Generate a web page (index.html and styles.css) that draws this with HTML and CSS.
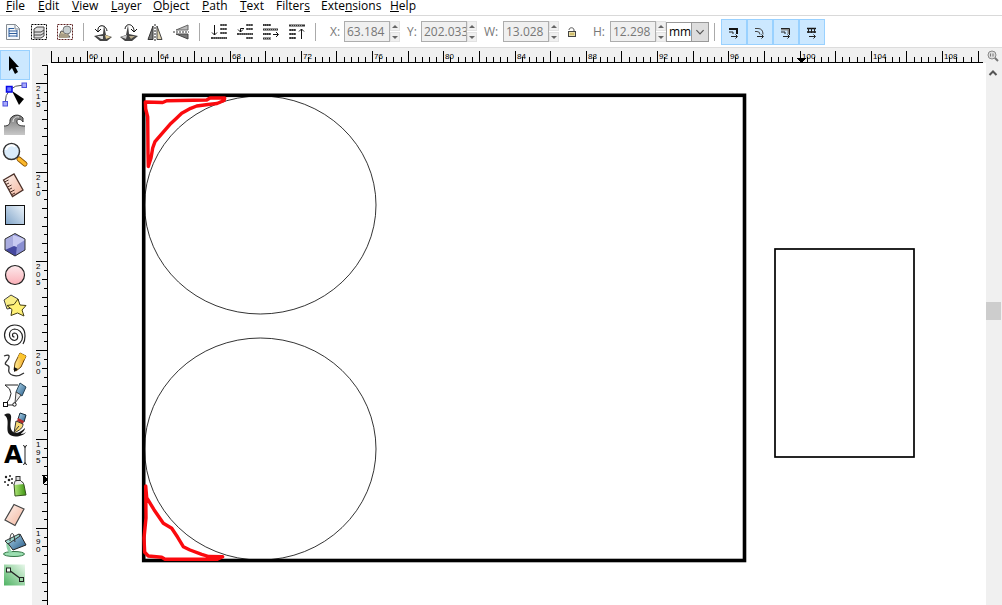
FILE: index.html
```html
<!DOCTYPE html>
<html lang="en">
<head>
<meta charset="utf-8">
<title>Vector editor</title>
<link rel="stylesheet" href="styles.css">
</head>
<body>
<svg class="defs" aria-hidden="true">
  <defs>
    <linearGradient id="blue" x1="0" y1="1" x2="1" y2="0"><stop offset="0" stop-color="#7fa3c8"/><stop offset="1" stop-color="#eef5fb"/></linearGradient>
    <linearGradient id="pink" x1="0" y1="0" x2="0" y2="1"><stop offset="0" stop-color="#fdeaec"/><stop offset="1" stop-color="#fbb0b8"/></linearGradient>
    <linearGradient id="peach" x1="0" y1="0" x2="1" y2="1"><stop offset="0" stop-color="#fdf3ee"/><stop offset="1" stop-color="#f3b49c"/></linearGradient>
    <linearGradient id="gold" x1="0" y1="0" x2="1" y2="0"><stop offset="0" stop-color="#fff0a0"/><stop offset="1" stop-color="#f0a010"/></linearGradient>
    <linearGradient id="green" x1="0" y1="1" x2="1" y2="0"><stop offset="0" stop-color="#4fb363"/><stop offset="1" stop-color="#e9f8eb"/></linearGradient>
    <linearGradient id="steel" x1="0" y1="0" x2="1" y2="1"><stop offset="0" stop-color="#b5dcf0"/><stop offset="1" stop-color="#255a87"/></linearGradient>
    <linearGradient id="wave" x1="0" y1="0" x2="0" y2="1"><stop offset="0" stop-color="#777"/><stop offset="1" stop-color="#c8c8c8"/></linearGradient>
    <linearGradient id="lime" x1="0" y1="0" x2="1" y2="0"><stop offset="0" stop-color="#b4e87c"/><stop offset="1" stop-color="#3c9410"/></linearGradient>
  </defs>
</svg>

<nav class="menubar" aria-label="Main menu">
  <button><u>F</u>ile</button>
  <button><u>E</u>dit</button>
  <button><u>V</u>iew</button>
  <button><u>L</u>ayer</button>
  <button><u>O</u>bject</button>
  <button><u>P</u>ath</button>
  <button><u>T</u>ext</button>
  <button>Filter<u>s</u></button>
  <button>Exte<u>n</u>sions</button>
  <button><u>H</u>elp</button>
</nav>

<div class="toolbar" role="toolbar" aria-label="Tool controls">
  <div class="group">
    <button class="tool" aria-label="Select all"><svg viewBox="0 0 20 20"><path d="M3.500 2.500h9l4 4v11h-13z" fill="#f4f8fc" stroke="#858b91"/><path d="M12 2.500V7h4.500" fill="none" stroke="#858b91"/><path d="M6 6.500h5M6 9h8M6 11.500h8M6 14h8M6 6v9M14 8v7" stroke="#2d5d9c" fill="none"/></svg></button>
    <button class="tool" aria-label="Select all in all layers"><svg viewBox="0 0 20 20"><rect x="2.500" y="2.500" width="15" height="15" fill="none" stroke="#000" stroke-dasharray="2 1"/><g fill="#ddd" stroke="#444"><path d="M5 13l3-2h7v3l-3 2H5z"/><path d="M5 10l3-2h7v3l-3 2H5z"/><path d="M5 7l3-2h7v3l-3 2H5z"/></g></svg></button>
    <button class="tool" aria-label="Deselect"><svg viewBox="0 0 20 20"><rect x="2.500" y="2.500" width="15" height="15" fill="none" stroke="#5d2020" stroke-dasharray="2 1"/><path d="M4 15l2-6 5 1 4 5z" fill="#d6c9a5" stroke="#555"/><circle cx="12" cy="8" r="4" fill="#c9d0d1" stroke="#777"/><path d="M5 11l9 2-2 3H4z" fill="#a89d85"/></svg></button>
  </div>
  <div class="group">
    <button class="tool" aria-label="Rotate counter-clockwise"><svg viewBox="0 0 20 20"><path d="M11 3l2 10 6 2-5 4H7l-6-5 9-2z" fill="#444"/><path d="M12 13l6 2-5 2z" fill="#e5d19a"/><path d="M4 14l6 0v3H8z" fill="#ddd"/><path d="M5 9c-1-7 8-7 9 0M2 7l3 3 3-3" fill="none" stroke="#111"/></svg></button>
    <button class="tool" aria-label="Rotate clockwise"><svg viewBox="0 0 20 20"><path d="M9 3l1 9 9 2-6 5H6l-5-4 6-2z" fill="#444"/><path d="M8 13l-6 2 5 2z" fill="#ccc"/><path d="M10 14l6 0-4 3z" fill="#b9ad8e"/><path d="M6 7c1-7 9-5 9 2M12 7l3 3 3-3" fill="none" stroke="#111"/></svg></button>
    <button class="tool" aria-label="Flip horizontally"><svg viewBox="0 0 20 20"><path d="M8 4v13.500H3z" fill="#777" stroke="#333"/><path d="M12 4v13.500h5z" fill="#ddd1ae" stroke="#444"/><path d="M10 2v17" stroke="#222" stroke-dasharray="2 1"/></svg></button>
    <button class="tool" aria-label="Flip vertically"><svg viewBox="0 0 20 20"><path d="M17 3v5H5z" fill="#bbb" stroke="#666"/><path d="M17 17v-5H5z" fill="#777" stroke="#444"/><path d="M2 10h16" stroke="#333" stroke-dasharray="2 1"/></svg></button>
  </div>
  <div class="group">
    <button class="tool" aria-label="Lower to bottom"><svg viewBox="0 0 20 20"><path d="M5.500 3v10M3 10.500l2.500 2.500L8 10.500" fill="none" stroke="#111"/><path d="M11 3h7M11 7h7M11 11h7M2 16h16" stroke="#444" stroke-width="2"/><path d="M11 3h7M11 7h7M11 11h7M4 16h14" stroke="#999" stroke-dasharray="1 1"/></svg></button>
    <button class="tool" aria-label="Lower"><svg viewBox="0 0 20 20"><path d="M9 6.500H5.500V10M3 7.500l2.500 2.500L8 7.500" fill="none" stroke="#111"/><path d="M11 3h7M11 7h7M2 12h16M11 16h7" stroke="#444" stroke-width="2"/><path d="M11 3h7M11 7h7M4 12h14M11 16h7" stroke="#999" stroke-dasharray="1 1"/></svg></button>
    <button class="tool" aria-label="Raise"><svg viewBox="0 0 20 20"><path d="M12 12.500h5M15 10l2.500 2.500L15 15" fill="none" stroke="#111"/><path d="M2 3h8M2 7.500h15M2 12h8M2 16.500h8" stroke="#333" stroke-width="2"/><path d="M3 3h7M3 7.500h13M3 12h7M3 16.500h7" stroke="#999" stroke-dasharray="1 1"/></svg></button>
    <button class="tool" aria-label="Raise to top"><svg viewBox="0 0 20 20"><path d="M14.500 17V7M12 9.500L14.500 7 17 9.500" fill="none" stroke="#111"/><path d="M2 3.500h16M2 8h7M2 12h7M2 16h7" stroke="#333" stroke-width="2"/><path d="M4 3.500h12M2 8h7M2 12h7M2 16h7" stroke="#999" stroke-dasharray="1 1"/></svg></button>
  </div>
  <div class="fields">
    <div class="field"><label for="x">X:</label><input id="x" value="63.184"><span class="spin"><button aria-label="Increase X"></button><button aria-label="Decrease X"></button></span></div>
    <div class="field"><label for="y">Y:</label><input id="y" value="202.033"><span class="spin"><button aria-label="Increase Y"></button><button aria-label="Decrease Y"></button></span></div>
    <div class="field wide"><label for="w">W:</label><input id="w" value="13.028"><span class="spin"><button aria-label="Increase W"></button><button aria-label="Decrease W"></button></span></div>
    <button class="lock" aria-label="Lock width and height"><svg viewBox="0 0 12 12"><path d="M3 4C3 1 8 1 8 4v2" fill="none" stroke="#555"/><rect x="2.500" y="5.500" width="7" height="5" fill="#e9dda6" stroke="#444"/><path d="M4 8h4" stroke="#b69e35"/></svg></button>
    <div class="field last"><label for="h">H:</label><input id="h" value="12.298"><span class="spin"><button aria-label="Increase H"></button><button aria-label="Decrease H"></button></span></div>
    <div class="unit"><select aria-label="Units"><option>mm</option></select><svg viewBox="0 0 16 20" aria-hidden="true"><path d="M4 8l4 4 4-4" fill="none" stroke="#555" stroke-width="1.300"/></svg></div>
  </div>
  <div class="toggles">
    <button aria-label="Scale stroke width" aria-pressed="true"><svg viewBox="0 0 24 24"><path d="M7 9h8v5" fill="none" stroke="#111" stroke-width="2"/><path d="M7 12h4v2M9 16.500h6M13.500 14.500l2 2-2 2" fill="none" stroke="#222"/></svg></button>
    <button aria-label="Scale rounded corners" aria-pressed="true"><svg viewBox="0 0 24 24"><path d="M7 8.500h3q5 0 5 6M7 11.500h2q3 0 3 3" fill="none" stroke="#444"/><path d="M9 16.500h6M13.500 14.500l2 2-2 2" fill="none" stroke="#222"/></svg></button>
    <button aria-label="Move gradients" aria-pressed="true"><svg viewBox="0 0 24 24"><path d="M7 9.500h7.500V14" fill="none" stroke="#888" stroke-width="2"/><path d="M7 8.500h8.500V15M7 12h4v2M9 16.500h6M13.500 14.500l2 2-2 2" fill="none" stroke="#222"/></svg></button>
    <button aria-label="Move patterns" aria-pressed="true"><svg viewBox="0 0 24 24"><path d="M7 8.500h9M7 12h9" stroke="#111" stroke-width="1.500"/><path d="M8.500 8v5M11.500 8v5M14.500 8v5M9 16.500h6M13.500 14.500l2 2-2 2" fill="none" stroke="#222"/></svg></button>
  </div>
</div>

<div class="workspace">
  <div class="toolbox" role="toolbar" aria-label="Toolbox" aria-orientation="vertical">
    <button class="active" aria-label="Select"><svg viewBox="0 0 30 30"><path d="M9 6v15l3-3 3 6 3-2-2.500-5H19z" fill="#000"/></svg></button>
    <button aria-label="Edit nodes"><svg viewBox="0 0 30 30"><path d="M5 24Q5 5 24 5" fill="none" stroke="#555"/><path d="M12 11l12 8-5 6z" fill="#000"/><g fill="#a7a9fa" stroke="#4c50dd"><rect x="22" y="3" width="4.500" height="4.500"/><rect x="3" y="21.500" width="4.500" height="4.500"/></g><rect x="6.500" y="6.500" width="5.500" height="5.500" fill="#6e78ff" stroke="#0808e8" stroke-width="1.500"/></svg></button>
    <button aria-label="Tweak"><svg viewBox="0 0 30 30"><path d="M4 16c5 0 6-2 6-6 1-5 9-7 13-2v4c-2-4-7-3-6 0 0 3 3 4 8 4v9H4z" fill="url(#wave)"/><path d="M4 16c5 0 6-2 6-6 1-5 9-7 13-2v4c-2-4-7-3-6 0 0 3 3 4 8 4" fill="none" stroke="#333"/><path d="M13 12c0-3 2-6 6-5" fill="none" stroke="#eee"/></svg></button>
    <button aria-label="Zoom"><svg viewBox="0 0 30 30"><path d="M19 19l6 5" stroke="#8a5200" stroke-width="5" stroke-linecap="round"/><path d="M19 19l6 5" stroke="#fbb82c" stroke-width="3.500" stroke-linecap="round"/><circle cx="11.500" cy="11.500" r="8" fill="#d9ebfa" stroke="#333" stroke-width="1.500"/><path d="M6 10c1-5 7-6 9-3" fill="none" stroke="#fff" stroke-width="2"/></svg></button>
    <button aria-label="Measure"><svg viewBox="0 0 30 30"><path d="M3.500 10L14 4l9 16-10.500 6.500z" fill="url(#peach)" stroke="#4b3028" stroke-width="1.300"/><path d="M4.500 12l4-2M6 14.500l3-1.500M7.500 17l4-2M9 19.500l3-1.500M10.500 22l4-2M12 24.500l3-1.500" stroke="#4b3028"/></svg></button>
    <button aria-label="Rectangle"><svg viewBox="0 0 30 30"><rect x="5.500" y="5.500" width="19" height="19" fill="url(#blue)" stroke="#111"/></svg></button>
    <button aria-label="3D box"><svg viewBox="0 0 30 30"><path d="M5 9l10-5.500L25 9v11l-10 6-10-6z" fill="#8d91d4"/><path d="M5 9l8-4.500V18l-8 2z" fill="#a9acdf"/><path d="M13 5l12 4v11l-12-3z" fill="#c8caf2"/><path d="M5 20l9-4 11 4-10 6z" fill="#4548a0"/><path d="M17 15l8-5v10l-9 5z" fill="#8a8fd2"/><path d="M5 9l10-5.500L25 9v11l-10 6-10-6z" fill="none" stroke="#333"/></svg></button>
    <button aria-label="Ellipse"><svg viewBox="0 0 30 30"><circle cx="15" cy="15" r="9.500" fill="url(#pink)" stroke="#222" stroke-width="1.200"/></svg></button>
    <button aria-label="Star"><svg viewBox="0 0 30 30"><path d="M4 10l7-5 7 4-1 8-10 2z" fill="#f9ee87" stroke="#444"/><path d="M18 9l2 6 6 .5-4 4.500 2 6-6.500-3-6.500 2.500 1-6-5-4 7-1z" fill="#fff176" stroke="#443e15"/></svg></button>
    <button aria-label="Spiral"><svg viewBox="0 0 30 30"><path d="M14.500 17A2 2 0 0 1 14.500 13A3.800 3.800 0 0 1 14.500 20.500A5.800 5.800 0 0 1 14.500 9A8 8 0 0 1 14.500 25A10 10 0 0 1 14.500 5Q25 5 25 16Q25 21 23 24" fill="none" stroke="#222" stroke-width="1.200"/></svg></button>
    <button aria-label="Pencil"><svg viewBox="0 0 30 30"><path d="M4 6c8-3 5 3 2 6-3 4 4 2 3 6-2 8 8 10 15 5" fill="none" stroke="#333" stroke-width="1.300"/><path d="M14 20l1-7 5-10 6 3-5 11-5 4z" fill="url(#gold)" stroke="#694208"/><path d="M20 3l6 3-2 4-6-3z" fill="#fbc52c"/><path d="M14 22v-5l4 2z" fill="#111"/></svg></button>
    <button aria-label="Bezier pen"><svg viewBox="0 0 30 30"><path d="M5 25Q17 12 5 5h13M7 25h7" fill="none" stroke="#222"/><path d="M20 3l6 4-4 9-6-4z" fill="url(#steel)" stroke="#284557"/><path d="M16 12l5 3-6 8z" fill="#e9e9e9" stroke="#444"/><rect x="3.500" y="22.500" width="4" height="4" fill="#fff" stroke="#111"/><circle cx="14.500" cy="24.500" r="1.700" fill="#fff" stroke="#111"/></svg></button>
    <button aria-label="Calligraphy"><svg viewBox="0 0 30 30"><path d="M4 5c5-3 8-1 7 4-1 7-1 12 4 14q5 0 10-5c0 3-4 5-4 6q3 0 5-2c-3 5-14 6-17 2-4-5 2-15-5-19z" fill="#151515"/><path d="M20 3l6 2-2 7-6-3z" fill="url(#steel)" stroke="#152b3c"/><path d="M18 8l6 3-1 3-6-3z" fill="#b52d2d"/><path d="M16 11l7 3c0 4-3 6-9 9z" fill="#f9db76" stroke="#333"/><path d="M14 22l5-6" stroke="#333"/></svg></button>
    <button class="letter" aria-label="Text"><span aria-hidden="true">A</span><svg viewBox="0 0 6 24"><path d="M1 2.500q2 0 2 2 0-2 2-2M3 4v16M1 21.500q2 0 2-2 0 2 2 2" fill="none" stroke="#222"/></svg></button>
    <button aria-label="Spray"><svg viewBox="0 0 30 30"><path d="M14 14q2-4 6-3 4 1 4 4l2 10-11 1z" fill="url(#lime)" stroke="#37551f"/><path d="M14 15l1-4 5-1 4 4" fill="#eee" stroke="#555"/><rect x="16" y="6.500" width="4" height="4" fill="#ddd" stroke="#333"/><g fill="#222"><circle cx="6" cy="7" r="1.200"/><circle cx="10" cy="6" r="1"/><circle cx="9" cy="10" r="1.300"/><circle cx="5" cy="12" r="1"/><circle cx="12" cy="9" r="1"/><circle cx="8" cy="15" r="1"/><circle cx="12" cy="13" r="1"/></g></svg></button>
    <button aria-label="Eraser"><svg viewBox="0 0 30 30"><path d="M14 4.500L24 9l-9 16.500L5 20z" fill="url(#peach)" stroke="#444" stroke-width="1.200"/></svg></button>
    <button aria-label="Paint bucket"><svg viewBox="0 0 30 30"><ellipse cx="14" cy="24" rx="10.500" ry="2.500" fill="#9bdfb1" stroke="#347546"/><path d="M8 12q-1 6 3 11" fill="none" stroke="#8ed3a7" stroke-width="3"/><path d="M7 12L20 4l6 11-13 5z" fill="url(#steel)" stroke="#222"/><path d="M5 11L19 4l1 2L8 14z" fill="#9ed7ce" stroke="#333"/><path d="M10 11c0-9 3-9 4-5l1 6" fill="none" stroke="#333"/></svg></button>
    <button aria-label="Connector"><svg viewBox="0 0 30 30"><rect x="4" y="4.500" width="21" height="21" fill="url(#green)"/><path d="M9 10l12 9" stroke="#222" stroke-width="1.300"/><rect x="6.500" y="8" width="4" height="4" fill="#edf8ee" stroke="#222"/><rect x="19.500" y="17.500" width="4" height="4" fill="#9ed4a7" stroke="#222"/></svg></button>
  </div>

  <svg class="ruler-h" id="ruler-h" aria-label="Horizontal ruler"></svg>
  <button class="zoom-page" aria-label="Zoom with window"><svg viewBox="0 0 14 14"><circle cx="6" cy="6" r="4" fill="#ddd" stroke="#888"/><path d="M9 9l3 3" stroke="#777" stroke-width="2"/><path d="M4.500 4.500v3M7 4.500v3" stroke="#777"/></svg></button>
  <svg class="ruler-v" id="ruler-v" aria-label="Vertical ruler"></svg>

  <main class="canvas">
    <svg role="img" aria-label="Drawing with two circles and two rectangles">
      <g transform="translate(-48 -63)" fill="none" stroke="#000">
        <ellipse cx="260.300" cy="205" rx="115.700" ry="109"/>
        <ellipse cx="260.300" cy="449" rx="115.700" ry="111"/>
        <rect x="143.700" y="95.300" width="600.800" height="465.200" stroke-width="3.600"/>
        <rect x="775" y="249" width="139" height="208" stroke-width="1.700"/>
        <g class="marker">
          <path d="M145.300 102l17.400.5 4-1.800 40-.7 3.300-2h14.700l-.7 2.500-7 3-9 1-11.300 1.500-6 2.300-9 5-6 5.700-5.700 5.300-7 8-8 9.400-2.300 6.300-1.700 10-2.700 8.500-.3-13.500-.3-36-2-8z"/>
          <path d="M145.700 486l1 11.700 7.300 12 9.300 13.600 8.400 5 6 9 5.600 9.400 6.700 3.300 11.700 4.300 7 2.200 14 .2-5.400 2.600H165l-3.300-2-13.400-1.300-3.600-3.700-.7-14.300 2-20z"/>
        </g>
      </g>
    </svg>
  </main>

  <div class="scrollbar">
    <button aria-label="Scroll up"><svg viewBox="0 0 14 14"><path d="M3.500 9L7 5.500l3.500 3.500" fill="none" stroke="#555" stroke-width="2"/></svg></button>
    <div class="track"><div class="thumb"></div></div>
  </div>
</div>
<script src="rulers.js"></script>
</body>
</html>
```
FILE: styles.css
```css
* { box-sizing: border-box; }

body {
  display: flex;
  flex-direction: column;
  height: 100vh;
  margin: 0;
  overflow: hidden;
  background: #fff;
  color: #000;
  font: 12px/16px "Open Sans", "Noto Sans", sans-serif;
}

button {
  margin: 0;
  padding: 0;
  border: 0;
  background: none;
  color: inherit;
  font: inherit;
}

svg { display: block; }

.defs { position: absolute; width: 0; height: 0; }

.menubar {
  display: grid;
  grid-template-columns: 32px 34px 39px 42px 49px 38px 36px 45px 69px 40px;
  align-items: start;
  height: 16px;
  padding-left: 6px;
  border-bottom: 1px solid #d9d9d9;
  line-height: 12px;
}
.menubar button { height: 12px; text-align: left; white-space: nowrap; }
.menubar u { text-underline-offset: 1px; text-decoration-skip-ink: none; }

.toolbar {
  display: flex;
  align-items: center;
  height: 32px;
  border-bottom: 1px solid #dcdcdc;
}
.group {
  display: flex;
  gap: 6px;
  padding-right: 8px;
  border-right: 1px solid #aaa;
  margin-right: 9px;
  height: 18px;
  align-items: center;
}
.group:first-child { padding-left: 3px; }
.tool, .tool svg { width: 20px; height: 20px; }

.fields { display: flex; align-items: center; color: #777; }
.field { display: flex; align-items: center; margin-left: 5px; }
.field + .field { margin-left: 7px; }
.field label { width: 14px; }
.field.wide label { width: 19px; }
.field.last label { width: 17px; }
.field input {
  width: 46px;
  height: 21px;
  padding: 0 0 0 2px;
  border: 1px solid #adadad;
  background: #f0f0f0;
  color: #777;
  font: inherit;
}
.spin { display: flex; flex-direction: column; gap: 1px; width: 10px; }
.spin button {
  display: grid;
  place-items: center;
  height: 10px;
  border: 1px solid #e2e2e2;
  background: #f0f0f0;
}
.spin button::before {
  content: "";
  border: 3px solid transparent;
  border-top: 0;
  border-bottom-color: #666;
}
.spin button:last-child::before {
  border-top: 3px solid #666;
  border-bottom: 0;
}
.lock { margin: 0 10px 0 7px; }
.lock svg { width: 12px; height: 12px; }
.unit {
  display: flex;
  height: 20px;
  width: 43px;
  border: 1px solid #999;
}
.unit select {
  flex: 1;
  min-width: 0;
  padding: 0 0 0 2px;
  border: 0;
  appearance: none;
  background: #fff;
  color: #000;
  font: inherit;
}
.unit svg { width: 17px; height: 18px; border-left: 1px solid #999; background: #ddd; }

.toggles {
  display: flex;
  align-items: center;
  margin-left: 5px;
}
.toggles::before {
  content: "";
  width: 1px;
  height: 18px;
  margin-right: 6px;
  background: #aaa;
}
.toggles button {
  width: 26px;
  height: 26px;
  border: 1px solid #99d1ff;
  background: #cce8ff;
}
.toggles svg { width: 24px; height: 24px; }

.workspace {
  display: grid;
  flex: 1;
  min-height: 0;
  grid-template-columns: 32px 16px 1fr 16px;
  grid-template-rows: 15px 1fr;
}
.toolbox {
  grid-row: 1 / 3;
  display: flex;
  flex-direction: column;
  padding-top: 2px;
  overflow: hidden;
}
.toolbox button { flex: none; width: 30px; height: 30px; }
.toolbox svg { width: 30px; height: 30px; }
.toolbox .active { background: #cce8ff; box-shadow: inset 0 0 0 1px #99d1ff; }
.toolbox .letter {
  display: flex;
  align-items: center;
  padding-left: 4px;
  font: bold 24px/30px "DejaVu Sans", sans-serif;
}
.toolbox .letter svg { width: 6px; height: 24px; margin-left: -1px; }

.ruler-h { grid-column: 2 / 4; width: 100%; height: 15px; background: #f0f0f0; }
.ruler-v { grid-column: 2; width: 16px; height: 100%; background: #f0f0f0; }
.ruler-h text, .ruler-v text { font: 8px "Liberation Sans", sans-serif; fill: #000; }
.ruler-h path, .ruler-v path { fill: none; stroke: #000; shape-rendering: crispEdges; }
.ruler-h .pointer, .ruler-v .pointer { fill: #000; stroke: none; }

.zoom-page { background: #f0f0f0; }
.zoom-page svg { width: 14px; height: 14px; }

.canvas { min-width: 0; min-height: 0; overflow: hidden; }
.canvas svg { width: 100%; height: 100%; }
.canvas ellipse { stroke-width: 0.8px; }
.marker { stroke: #fb0a0e; stroke-width: 3.4px; stroke-linejoin: round; stroke-linecap: round; }

.scrollbar { display: flex; flex-direction: column; background: #f0f0f0; }
.scrollbar button { height: 17px; padding-top: 2px; }
.scrollbar svg { width: 14px; height: 14px; }
.track { display: flex; flex: 1; flex-direction: column; }
.track::before { content: ""; flex: 222; }
.track::after { content: ""; flex: 285; }
.thumb { width: 15px; height: 18px; background: #cdcdcd; }
```
FILE: rulers.js
```js
const NS = "http://www.w3.org/2000/svg";

function add(parent, name, attrs, text) {
  const node = document.createElementNS(NS, name);
  for (const key in attrs) node.setAttribute(key, attrs[key]);
  if (text !== undefined) node.textContent = text;
  parent.appendChild(node);
}

const UNIT = 17.815;

function drawHorizontal(svg) {
  const end = svg.clientWidth - 3;
  const origin = 55.5;
  let d = `M20 14.5H${end}`;
  for (let i = -5; origin + i * UNIT * 0.4 < end; i++) {
    const x = Math.floor(origin + i * UNIT * 0.4) + 0.5;
    d += `M${x} ${i % 5 === 0 ? 3 : 9}V15`;
    if (i % 10 === 0) {
      add(svg, "text", { x: x + 1.5, y: 11 }, 60 + i * 0.4);
    }
  }
  add(svg, "path", { d });
  add(svg, "path", { d: "M765 10h9l-4.500 5z", class: "pointer" });
}

function drawVertical(svg) {
  const end = svg.clientHeight;
  const origin = 20.5;
  let d = `M15.5 2V${end}`;
  for (let i = -2; origin + i * UNIT / 2 < end; i++) {
    const y = Math.floor(origin + i * UNIT / 2) + 0.5;
    const start = i % 10 === 0 ? 4 : i % 2 === 0 ? 10 : 12;
    d += `M${start} ${y}H16`;
    if (i % 10 === 0) {
      [...String(215 - i / 2)].forEach((digit, n) => {
        add(svg, "text", { x: 4, y: y + 7 + n * 8 }, digit);
      });
    }
  }
  add(svg, "path", { d });
  add(svg, "path", { d: "M11 412v9l5-4.500z", class: "pointer" });
}

drawHorizontal(document.getElementById("ruler-h"));
drawVertical(document.getElementById("ruler-v"));
```
